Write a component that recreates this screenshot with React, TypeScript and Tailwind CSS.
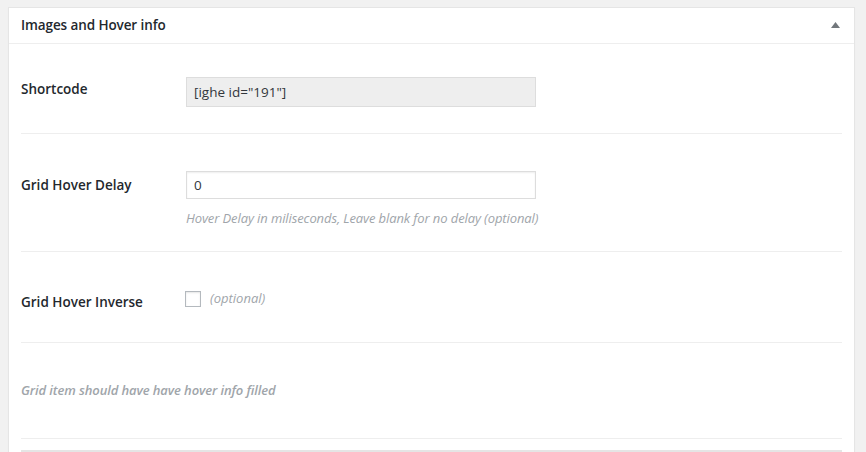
export default function App() {
  const font = { fontFamily: '"Open Sans", "Noto Sans", sans-serif' };
  return (
    <div className="min-h-[452px] bg-[#f1f1f1] pt-[7px] pl-[8px] pr-[11px] overflow-hidden" style={font}>
      <div className="bg-white border border-[#e5e5e5] shadow-[0_1px_1px_rgba(0,0,0,0.04)]">
        <div className="h-[36px] flex items-center justify-between pl-[12px] pr-[14px] border-b border-[#eeeeee]">
          <h2 className="text-[13.5px] font-semibold text-[#23282d] tracking-[-0.1px]">Images and Hover info</h2>
          <svg width="9" height="6" viewBox="0 0 9 6" className="mt-[-2px]">
            <path d="M0 6 L4.5 0 L9 6 Z" fill="#72777c" />
          </svg>
        </div>
        <div className="px-[12px]">
          <div className="flex pt-[33px] pb-[26px] border-b border-[#eeeeee]">
            <div className="w-[165px] shrink-0 h-[30px] flex items-center mt-[-3px] text-[13.5px] font-semibold text-[#23282d]">
              Shortcode
            </div>
            <div className="w-[350px] h-[30px] bg-[#eeeeee] border border-[#dddddd] flex items-center px-[7px] text-[13.5px] text-[#32373c]">
              [ighe id="191"]
            </div>
          </div>
          <div className="flex pt-[37px] pb-[24px] border-b border-[#eeeeee]">
            <div className="w-[165px] shrink-0 h-[28px] flex items-center text-[13.5px] font-semibold text-[#23282d]">
              Grid Hover Delay
            </div>
            <div>
              <div className="w-[350px] h-[28px] bg-white border border-[#dddddd] shadow-[inset_0_1px_2px_rgba(0,0,0,0.07)] flex items-center px-[7px] text-[13.5px] text-[#32373c]">
                0
              </div>
              <p className="mt-[10px] text-[13px] italic text-[#a0a5aa] leading-[18px] tracking-[-0.1px]">
                Hover Delay in miliseconds, Leave blank for no delay (optional)
              </p>
            </div>
          </div>
          <div className="flex items-center h-[91px] pt-[3px] border-b border-[#eeeeee]">
            <div className="w-[164px] shrink-0 text-[13.5px] font-semibold text-[#23282d] mt-[7px]">
              Grid Hover Inverse
            </div>
            <div className="flex items-center gap-[9px]">
              <span className="w-[16px] h-[16px] border border-[#b4b9be] bg-white shadow-[inset_0_1px_2px_rgba(0,0,0,0.1)]" />
              <span className="text-[13px] italic text-[#a0a5aa]">(optional)</span>
            </div>
          </div>
          <div className="h-[96px] flex items-center border-b border-[#eeeeee]">
            <p className="text-[13px] italic font-semibold text-[#a0a5aa] tracking-[-0.1px]">
              Grid item should have have hover info filled
            </p>
          </div>
          <div className="mt-[11px] h-[4px] bg-[#e5e5e5]" />
        </div>
      </div>
    </div>
  );
}
